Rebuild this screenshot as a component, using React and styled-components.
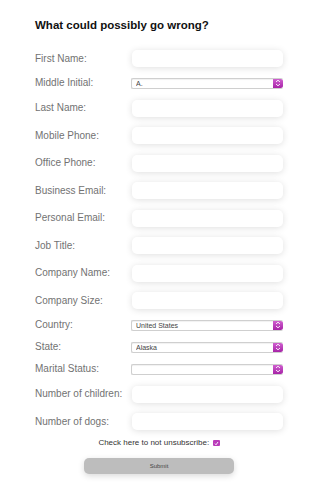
import React from 'react'
import styled, { createGlobalStyle } from 'styled-components'

const GlobalStyle = createGlobalStyle`
    html, body {
        margin: 0;
        padding: 0;
        background: #ffffff;
    }
    body {
        font-family: "Liberation Sans", Arial, Helvetica, sans-serif;
    }
`
const Page = styled.div`
    padding: 19px 0 20px 35px;
    width: 248px;
`
const Title = styled.h2`
    margin: 0 0 18px 0;
    font-size: 11.5px;
    line-height: 13px;
    font-weight: bold;
    color: #111;
`
const Form = styled.form`
    display: grid;
    grid-template-columns: 97px 151px;
    row-gap: 10.5px;
    align-items: center;
`
const Label = styled.label`
    font-size: 10px;
    line-height: 10px;
    color: #727272;
    white-space: nowrap;
`
const TextInput = styled.input`
    box-sizing: border-box;
    height: 17px;
    width: 151px;
    margin: 0;
    border: none;
    border-radius: 5px;
    background: #fff;
    box-shadow: 0 1px 7px rgba(0, 0, 0, 0.13);
    outline: none;
`
const SelectBox = styled.div`
    box-sizing: border-box;
    display: flex;
    align-items: stretch;
    height: 11.5px;
    width: 152px;
    margin-left: -1px;
    border: 1px solid #cfcfcf;
    border-right: none;
    border-radius: 2px;
    background: #fff;
    box-shadow: inset 0 1px 1px rgba(0, 0, 0, 0.06);
    overflow: hidden;
`
const NativeSelect = styled.select`
    flex: 1;
    min-width: 0;
    appearance: none;
    -webkit-appearance: none;
    border: none;
    background: transparent;
    margin: 0;
    padding: 0 0 0 4px;
    font-family: "Liberation Sans", Arial, sans-serif;
    font-size: 7px;
    line-height: 9px;
    color: #444;
    outline: none;
`
const Stepper = styled.span`
    width: 10px;
    display: flex;
    align-items: center;
    justify-content: center;
    background: linear-gradient(#cf5fcf, #a724a7);
    border-radius: 0 2px 2px 0;
`
const CheckLine = styled.div`
    margin-top: 8px;
    display: flex;
    justify-content: center;
    align-items: center;
    font-size: 8px;
    line-height: 10px;
    color: #333;
`
const Box = styled.span`
    width: 6.5px;
    height: 6.5px;
    margin-left: 4px;
    border-radius: 1px;
    background: #b93cb9;
    display: flex;
    align-items: center;
    justify-content: center;
`
const Submit = styled.button`
    display: block;
    margin: 10px 0 0 49px;
    width: 150px;
    height: 16px;
    border: none;
    border-radius: 5px;
    background: #bdbdbd;
    box-shadow: 0 2px 6px rgba(0, 0, 0, 0.15);
    font-family: "Liberation Sans", Arial, sans-serif;
    font-size: 6px;
    color: #444;
    padding: 0;
`

const Arrows = () => (
    <svg width="6" height="8" viewBox="0 0 6 8">
        <path d="M1 3 L3 1.2 L5 3 M1 5 L3 6.8 L5 5" stroke="#fff" strokeWidth="0.9" fill="none" />
    </svg>
)

const Select = ({ value }) => (
    <SelectBox>
        <NativeSelect defaultValue={value}>
            <option value={value}>{value}</option>
        </NativeSelect>
        <Stepper><Arrows /></Stepper>
    </SelectBox>
)

const fields = [
    ['First Name:'],
    ['Middle Initial:', 'A.'],
    ['Last Name:'],
    ['Mobile Phone:'],
    ['Office Phone:'],
    ['Business Email:'],
    ['Personal Email:'],
    ['Job Title:'],
    ['Company Name:'],
    ['Company Size:'],
    ['Country:', 'United States'],
    ['State:', 'Alaska'],
    ['Marital Status:', ''],
    ['Number of children:'],
    ['Number of dogs:'],
]

const App = () => {
    return (
        <Page>
            <GlobalStyle />
            <Title>What could possibly go wrong?</Title>
            <Form>
                {fields.map(([label, select]) => (
                    <React.Fragment key={label}>
                        <Label>{label}</Label>
                        {select === undefined ? <TextInput type="text" /> : <Select value={select} />}
                    </React.Fragment>
                ))}
            </Form>
            <CheckLine>
                Check here to not unsubscribe:
                <Box>
                    <svg width="5" height="5" viewBox="0 0 5 5">
                        <path d="M1 2.6 L2 3.8 L4 1" stroke="#fff" strokeWidth="0.9" fill="none" />
                    </svg>
                </Box>
            </CheckLine>
            <Submit type="button">Submit</Submit>
        </Page>
    )
}

export default App
